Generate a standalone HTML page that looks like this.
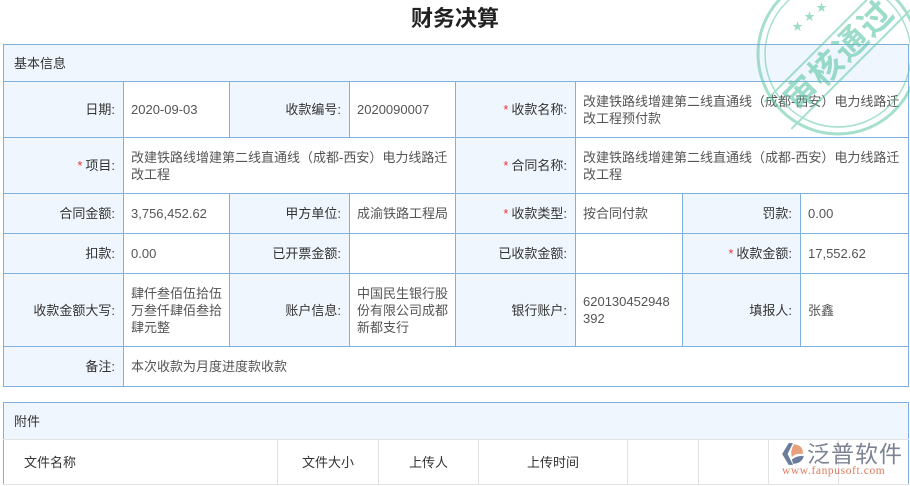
<!DOCTYPE html>
<html><head><meta charset="utf-8"><style>
*{margin:0;padding:0;box-sizing:border-box}
body{width:910px;height:486px;background:#fff;font-family:"Liberation Sans","Noto Sans CJK SC",sans-serif;font-size:13px;color:#333;position:relative;overflow:hidden}
h1{position:absolute;top:1px;left:0;width:910px;text-align:center;font-size:22px;font-weight:bold;color:#222}
table{position:absolute;border-collapse:collapse;table-layout:fixed}
td{border:1px solid #7fb0de;vertical-align:middle;line-height:17px}
td.l{background:#f0f6fd;text-align:right;padding-right:8px}
td.v{background:#fff;color:#555;padding-left:7px;padding-right:6px}
.s{color:#e33;margin-right:3px}
.hd{background:#f0f6fd;padding-left:10px}
#t2 td{border-color:#e2e2e2}
#t2 .hd{border:1px solid #7fb0de;border-bottom-color:#e2e2e2}
#t2 tr td:first-child{border-left-color:#7fb0de}
#t2 tr td:last-child{border-right-color:#7fb0de}
</style></head><body>
<h1>财务决算</h1>
<table style="left:3px;top:44px;width:905px">
<colgroup><col style="width:120px"><col style="width:106px"><col style="width:120px"><col style="width:106px"><col style="width:120px"><col style="width:107px"><col style="width:118px"><col style="width:108px"></colgroup>
<tr style="height:37px"><td colspan="8" class="hd">基本信息</td></tr>
<tr style="height:56px"><td class="l">日期:</td><td class="v">2020-09-03</td><td class="l">收款编号:</td><td class="v">2020090007</td><td class="l"><span class="s">*</span>收款名称:</td><td class="v" colspan="3">改建铁路线增建第二线直通线（成都-西安）电力线路迁改工程预付款</td></tr>
<tr style="height:56px"><td class="l"><span class="s">*</span>项目:</td><td class="v" colspan="3">改建铁路线增建第二线直通线（成都-西安）电力线路迁改工程</td><td class="l"><span class="s">*</span>合同名称:</td><td class="v" colspan="3">改建铁路线增建第二线直通线（成都-西安）电力线路迁改工程</td></tr>
<tr style="height:40px"><td class="l">合同金额:</td><td class="v">3,756,452.62</td><td class="l">甲方单位:</td><td class="v">成渝铁路工程局</td><td class="l"><span class="s">*</span>收款类型:</td><td class="v">按合同付款</td><td class="l">罚款:</td><td class="v">0.00</td></tr>
<tr style="height:40px"><td class="l">扣款:</td><td class="v">0.00</td><td class="l">已开票金额:</td><td class="v"></td><td class="l">已收款金额:</td><td class="v"></td><td class="l"><span class="s">*</span>收款金额:</td><td class="v">17,552.62</td></tr>
<tr style="height:73px"><td class="l">收款金额大写:</td><td class="v">肆仟叁佰伍拾伍万叁仟肆佰叁拾肆元整</td><td class="l">账户信息:</td><td class="v">中国民生银行股份有限公司成都新都支行</td><td class="l">银行账户:</td><td class="v" style="word-break:break-all">620130452948392</td><td class="l">填报人:</td><td class="v">张鑫</td></tr>
<tr style="height:40px"><td class="l">备注:</td><td class="v" colspan="7">本次收款为月度进度款收款</td></tr>
</table>
<table id="t2" style="left:3px;top:402px;width:905px">
<colgroup><col style="width:274px"><col style="width:101px"><col style="width:100px"><col style="width:149px"><col style="width:71px"><col style="width:70px"><col style="width:70px"><col style="width:70px"></colgroup>
<tr style="height:37px"><td colspan="8" class="hd">附件</td></tr>
<tr style="height:45px"><td style="padding-left:20px">文件名称</td><td style="text-align:center">文件大小</td><td style="text-align:center">上传人</td><td style="text-align:center">上传时间</td><td></td><td></td><td></td><td></td></tr>
</table>
<svg style="position:absolute;left:752px;top:-32px" width="172" height="172" viewBox="0 0 172 172">
<g fill="none" stroke="#5cc6a6" opacity="0.55">
<circle cx="86" cy="86" r="80" stroke-width="3"/>
<circle cx="86" cy="86" r="73" stroke-width="1.5"/>
<g transform="rotate(-45 86 86)"><line x1="0" y1="68" x2="172" y2="68" stroke-width="2"/><line x1="0" y1="106" x2="172" y2="106" stroke-width="2"/></g>
</g>
<g fill="#5cc6a6" opacity="0.6">
<text x="86" y="99" transform="rotate(-45 86 86)" text-anchor="middle" font-size="33" font-weight="bold" font-family="Noto Sans CJK SC,sans-serif" letter-spacing="2">审核通过</text>
<text x="40" y="62" font-size="11">★</text><text x="52" y="52" font-size="11">★</text><text x="64" y="43" font-size="11">★</text>
</g>
</svg>
<div style="position:absolute;left:780px;top:440px;width:125px;height:42px">
<svg style="position:absolute;left:0;top:2px" width="26" height="24" viewBox="0 0 24 22"><path d="M8 1 L2 11 L8 21 L12 21 L7 11 L12 1Z" fill="#6b7c9a"/><path d="M13 2 Q22 3 21 11 Q14 10 11 14 Q9 8 13 2Z" fill="#e8a07c"/><path d="M11 16 Q16 12 22 13 Q20 20 12 20Z" fill="#6b7c9a"/></svg>
<div style="position:absolute;left:27px;top:-2px;font-size:23px;color:#7c8494;font-family:'Noto Sans CJK SC',sans-serif;letter-spacing:1px;line-height:28px">泛普软件</div>
<div style="position:absolute;left:2px;top:25px;font-size:11.5px;color:#e07a5a;font-family:'Liberation Serif',serif;line-height:13px;letter-spacing:0.6px">www.fanpusoft.com</div>
</div>
</body></html>
